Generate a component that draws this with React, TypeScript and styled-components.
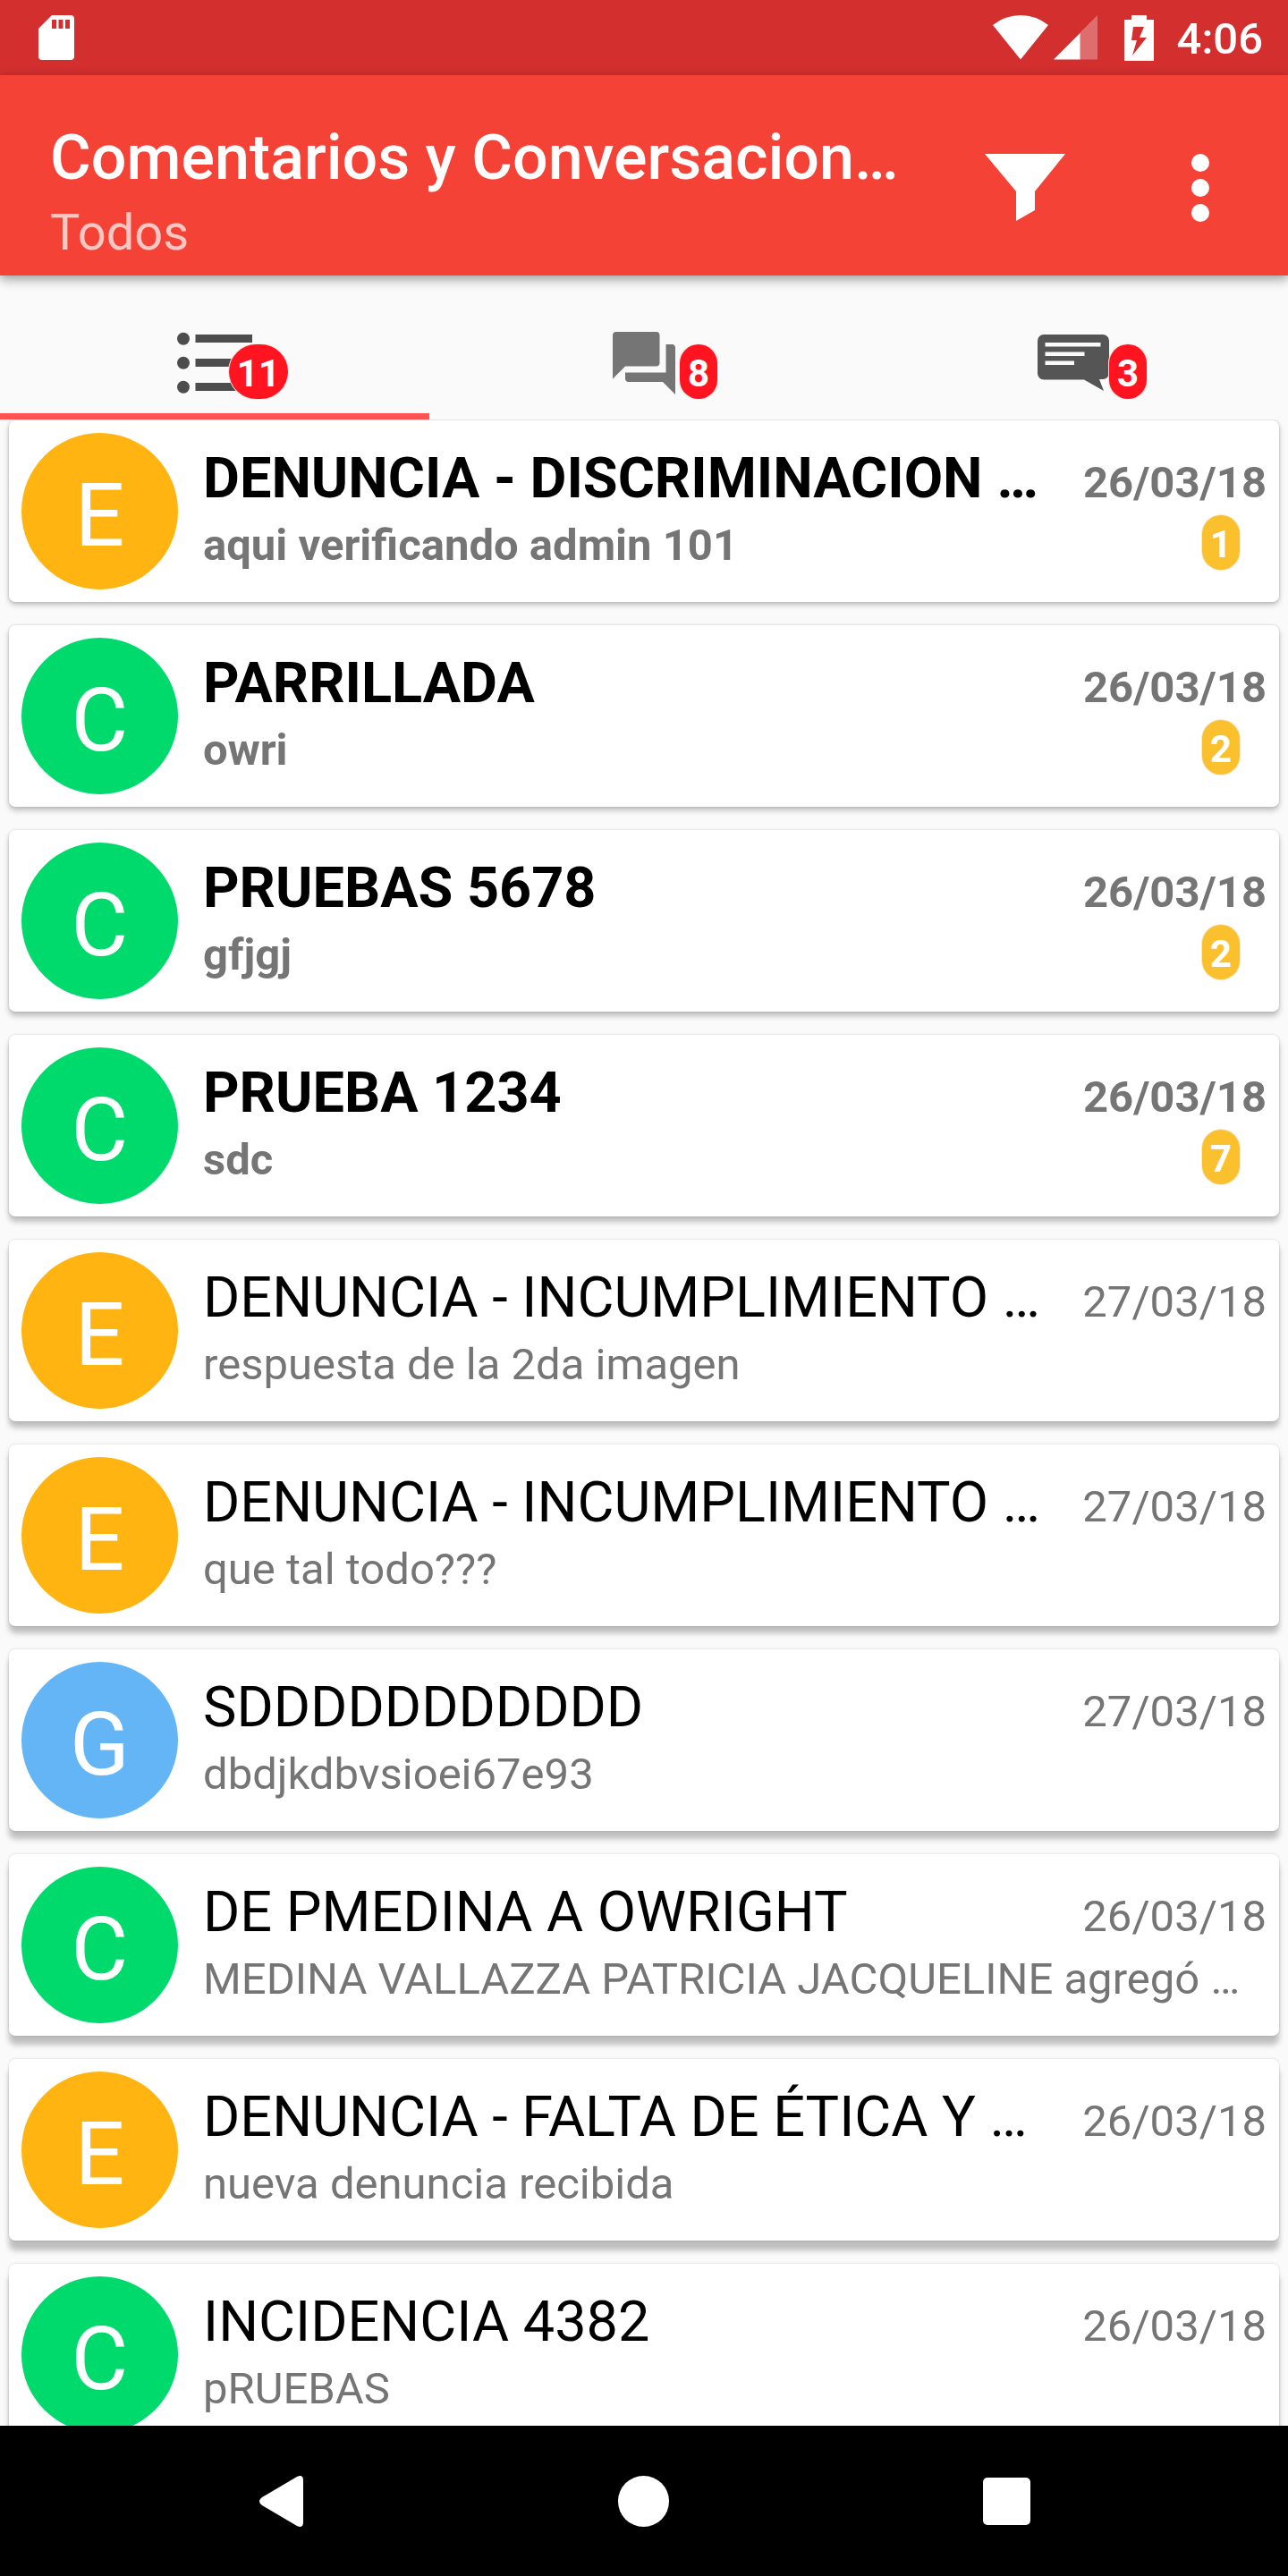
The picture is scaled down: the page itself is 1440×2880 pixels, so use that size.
import React from "react";
import styled, { createGlobalStyle, css } from "styled-components";

const GlobalStyle = createGlobalStyle`
  *, *::before, *::after { box-sizing: border-box; }
  body {
    margin: 0;
    background: #fafafa;
    font-family: Roboto, "Liberation Sans", sans-serif;
  }
  button {
    margin: 0;
    padding: 0;
    border: 0;
    background: none;
    color: inherit;
    font: inherit;
    cursor: pointer;
  }
`;

const Screen = styled.div`
  display: flex;
  flex-direction: column;
  height: 100vh;
  overflow: hidden;
`;

const StatusBar = styled.div`
  display: flex;
  flex: none;
  align-items: center;
  justify-content: space-between;
  height: 84px;
  padding: 0 28px 0 43px;
  background: #d32f2f;
  color: #fff;
`;

const StatusIcons = styled.div`
  display: flex;
  align-items: center;
`;

const Signals = styled.div`
  display: flex;
  gap: 6px;
  margin-right: 30px;
`;

const Clock = styled.time`
  margin-left: 26px;
  padding-top: 3px;
  font-size: 49px;
  line-height: 56px;
  font-weight: 500;
`;

const AppBar = styled.header`
  position: relative;
  z-index: 1;
  display: flex;
  flex: none;
  align-items: center;
  padding: 28px 0 0 56px;
  background: #f44336;
  color: #fff;
  box-shadow: 0 4px 12px rgba(0, 0, 0, 0.4);
`;

const Titles = styled.div`
  flex: 1;
  min-width: 0;
  padding: 24px 0 4px;
`;

const ellipsis = css`
  overflow: hidden;
  white-space: nowrap;
  text-overflow: ellipsis;
`;

const Title = styled.h1`
  ${ellipsis}
  margin: 0;
  font-size: 70px;
  line-height: 80px;
  font-weight: 500;
`;

const Subtitle = styled.p`
  ${ellipsis}
  margin: 0;
  color: rgba(255, 255, 255, 0.7);
  font-size: 56px;
  line-height: 88px;
`;

const ActionButton = styled.button`
  display: flex;
  flex: none;
  align-items: center;
  justify-content: center;
  width: 196px;
  height: 196px;
`;

const Tabs = styled.nav`
  display: flex;
  flex: none;
`;

const Tab = styled.button<{ $active?: boolean }>`
  display: flex;
  flex: 1;
  justify-content: center;
  padding: 56px 0 14px;
  border-bottom: 7px solid ${(p) => (p.$active ? "#ff5252" : "transparent")};
`;

const TabIcon = styled.span`
  position: relative;
  width: 84px;
  height: 84px;
`;

const Badge = styled.span<{ $tone: "red" | "amber" }>`
  flex: none;
  height: 61px;
  padding: 4px 9px 0;
  border-radius: 31px;
  background: ${(p) => (p.$tone === "red" ? "#ff1420" : "#fbc02d")};
  box-shadow: 0 0 0 1px ${(p) => (p.$tone === "red" ? "#ffe4e4" : "#f8ead0")};
  color: #fff;
  font-size: 42px;
  line-height: 58px;
  font-weight: 700;
`;

const TabBadge = styled(Badge)`
  position: absolute;
  top: 21px;
  right: -40px;
`;

const List = styled.ul`
  display: flex;
  flex: 1;
  flex-direction: column;
  gap: 26px;
  min-height: 0;
  margin: 0;
  padding: 1px 10px 0;
  overflow: hidden;
  list-style: none;
`;

const Card = styled.li<{ $depth: number }>`
  display: flex;
  flex: none;
  gap: 28px;
  padding: 14px;
  border-radius: 7px;
  background: #fff;
  box-shadow:
    0 0 3px rgba(0, 0, 0, 0.16),
    0 ${(p) => 3 + p.$depth}px 6px rgba(0, 0, 0, 0.24);
`;

const Avatar = styled.div<{ $color: string }>`
  display: flex;
  flex: none;
  align-items: center;
  justify-content: center;
  width: 175px;
  height: 175px;
  padding-top: 9px;
  border-radius: 50%;
  background: ${(p) => p.$color};
  color: #fff;
  font-size: 98px;
`;

const Body = styled.div<{ $unread: boolean }>`
  flex: 1;
  min-width: 0;
  padding-top: 9px;
  font-weight: ${(p) => (p.$unread ? 700 : 400)};
`;

const Heading = styled.div`
  display: flex;
  align-items: baseline;
  justify-content: space-between;
  gap: 28px;
`;

const Subject = styled.h2`
  ${ellipsis}
  margin: 0;
  color: #000;
  font-size: 63px;
  line-height: 83px;
  font-weight: inherit;
`;

const DateLabel = styled.time`
  flex: none;
  color: #757575;
  font-size: 49px;
`;

const Detail = styled.div<{ $badged: boolean }>`
  display: flex;
  align-items: flex-start;
  justify-content: space-between;
  padding-right: ${(p) => (p.$badged ? 30 : 0)}px;
`;

const Preview = styled.p`
  ${ellipsis}
  margin: 0;
  color: #757575;
  font-size: 49px;
  line-height: 68px;
`;

const NavBar = styled.footer`
  display: flex;
  flex: none;
  height: 168px;
  padding: 0 112px;
  background: #000;
`;

const NavButton = styled.button`
  display: flex;
  flex: 1;
  align-items: center;
  justify-content: center;
`;

const SdCardIcon = () => (
  <svg width="40" height="50" viewBox="0 0 40 50" fill="#fff" aria-hidden="true">
    <path
      fillRule="evenodd"
      d="M15 0H36a4 4 0 0 1 4 4V46a4 4 0 0 1-4 4H4a4 4 0 0 1-4-4V15ZM15 5V15H20V5ZM22.500 5V15H27.500V5ZM30 5V15H35V5Z"
    />
  </svg>
);

const WifiIcon = () => (
  <svg width="62" height="50" viewBox="0 0 62 50" fill="#fff" aria-hidden="true">
    <path d="M0 11Q14 0 31 0T62 11L31 49.500Z" />
  </svg>
);

const SignalIcon = () => (
  <svg width="49" height="50" viewBox="0 0 49 50" fill="#fff" aria-hidden="true">
    <path opacity=".3" d="M49 0V49.500H29V20Z" />
    <path d="M29.500 20V49.500H0Z" />
  </svg>
);

const BatteryIcon = () => (
  <svg width="33" height="51" viewBox="0 0 33 51" fill="#fff" aria-hidden="true">
    <path fillRule="evenodd" d="M8 0H25V5H33V51H0V5H8ZM10 13L8 28H14L9 45L25 25H17L22 13Z" />
  </svg>
);

const FilterIcon = () => (
  <svg width="90" height="76" viewBox="0 0 90 76" fill="#fff" aria-hidden="true">
    <path d="M0 0H90L56 42V63L35 75V42Z" />
  </svg>
);

const MoreIcon = () => (
  <svg width="20" height="76" viewBox="0 0 20 76" fill="#fff" aria-hidden="true">
    <circle cx="10" cy="10" r="10" />
    <circle cx="10" cy="38" r="10" />
    <circle cx="10" cy="66" r="10" />
  </svg>
);

const ListIcon = () => (
  <svg width="84" height="84" viewBox="0 0 84 84" fill="#4d4d4d" aria-hidden="true">
    <circle cx="7" cy="14.700" r="7" />
    <circle cx="7" cy="41.700" r="7" />
    <circle cx="7" cy="68.700" r="7" />
    <path d="M20.500 10H84V19H20.500ZM20.500 37H84V46H20.500ZM20.500 64H84V73H20.500Z" />
  </svg>
);

const ForumIcon = () => (
  <svg width="84" height="84" viewBox="0 0 24 24" fill="#757575" aria-hidden="true">
    <path d="M21 6h-2v9H6v2c0 .55.45 1 1 1h11l4 4V7c0-.55-.45-1-1-1zm-4 6V3c0-.55-.45-1-1-1H3c-.55 0-1 .45-1 1v14l4-4h10c.55 0 1-.45 1-1z" />
  </svg>
);

const CommentIcon = () => (
  <svg width="84" height="84" viewBox="0 0 84 84" aria-hidden="true">
    <path
      fill="#555"
      d="M9 10H75a7 7 0 0 1 7 7V53a7 7 0 0 1-7 7H71L76 73L54 60.500H9a7 7 0 0 1-7-7V17a7 7 0 0 1 7-7Z"
    />
    <path fill="#fafafa" d="M10.500 19H72.500V23.500H10.500ZM10.500 29.500H54.500V34H10.500ZM10.500 39.500H43V44H10.500Z" />
  </svg>
);

const BackIcon = () => (
  <svg width="49" height="57" viewBox="0 0 49 57" fill="#fff" aria-hidden="true">
    <path d="M42 1Q49-2 49 5V52Q49 59 42 56L3 33Q-3 28.500 3 24Z" />
  </svg>
);

const HomeIcon = () => (
  <svg width="57" height="57" viewBox="0 0 57 57" fill="#fff" aria-hidden="true">
    <circle cx="28.500" cy="28.500" r="28.500" />
  </svg>
);

const RecentIcon = () => (
  <svg width="53" height="53" viewBox="0 0 53 53" fill="#fff" aria-hidden="true">
    <rect width="53" height="53" rx="5" />
  </svg>
);

const avatarColors: Record<string, string> = {
  E: "#ffb412",
  C: "#00da6c",
  G: "#64b5f6",
};

interface Conversation {
  kind: string;
  subject: string;
  preview: string;
  date: string;
  unread?: number;
}

const conversations: Conversation[] = [
  { kind: "E", subject: "DENUNCIA - DISCRIMINACION …", preview: "aqui verificando admin 101", date: "26/03/18", unread: 1 },
  { kind: "C", subject: "PARRILLADA", preview: "owri", date: "26/03/18", unread: 2 },
  { kind: "C", subject: "PRUEBAS 5678", preview: "gfjgj", date: "26/03/18", unread: 2 },
  { kind: "C", subject: "PRUEBA 1234", preview: "sdc", date: "26/03/18", unread: 7 },
  { kind: "E", subject: "DENUNCIA - INCUMPLIMIENTO …", preview: "respuesta de la 2da imagen", date: "27/03/18" },
  { kind: "E", subject: "DENUNCIA - INCUMPLIMIENTO …", preview: "que tal todo???", date: "27/03/18" },
  { kind: "G", subject: "SDDDDDDDDDDD", preview: "dbdjkdbvsioei67e93", date: "27/03/18" },
  { kind: "C", subject: "DE PMEDINA A OWRIGHT", preview: "MEDINA VALLAZZA PATRICIA JACQUELINE agregó …", date: "26/03/18" },
  { kind: "E", subject: "DENUNCIA - FALTA DE ÉTICA Y …", preview: "nueva denuncia recibida", date: "26/03/18" },
  { kind: "C", subject: "INCIDENCIA 4382", preview: "pRUEBAS", date: "26/03/18" },
];

const tabs = [
  { label: "Todos", count: 11, Icon: ListIcon },
  { label: "Conversaciones", count: 8, Icon: ForumIcon },
  { label: "Comentarios", count: 3, Icon: CommentIcon },
];

export default function App() {
  const [active, setActive] = React.useState(0);

  return (
    <>
      <GlobalStyle />
      <Screen>
        <StatusBar>
          <SdCardIcon />
          <StatusIcons>
            <Signals>
              <WifiIcon />
              <SignalIcon />
            </Signals>
            <BatteryIcon />
            <Clock>4:06</Clock>
          </StatusIcons>
        </StatusBar>

        <AppBar>
          <Titles>
            <Title>Comentarios y Conversacion…</Title>
            <Subtitle>Todos</Subtitle>
          </Titles>
          <ActionButton type="button" aria-label="Filtrar">
            <FilterIcon />
          </ActionButton>
          <ActionButton type="button" aria-label="Más opciones">
            <MoreIcon />
          </ActionButton>
        </AppBar>

        <Tabs>
          {tabs.map(({ label, count, Icon }, i) => (
            <Tab
              key={label}
              type="button"
              aria-label={label}
              aria-pressed={i === active}
              $active={i === active}
              onClick={() => setActive(i)}
            >
              <TabIcon>
                <Icon />
                <TabBadge $tone="red">{count}</TabBadge>
              </TabIcon>
            </Tab>
          ))}
        </Tabs>

        <List>
          {conversations.map((item, i) => (
            <Card key={i} $depth={i}>
              <Avatar $color={avatarColors[item.kind]}>{item.kind}</Avatar>
              <Body $unread={item.unread !== undefined}>
                <Heading>
                  <Subject>{item.subject}</Subject>
                  <DateLabel>{item.date}</DateLabel>
                </Heading>
                <Detail $badged={item.unread !== undefined}>
                  <Preview>{item.preview}</Preview>
                  {item.unread !== undefined && <Badge $tone="amber">{item.unread}</Badge>}
                </Detail>
              </Body>
            </Card>
          ))}
        </List>

        <NavBar>
          <NavButton type="button" aria-label="Atrás">
            <BackIcon />
          </NavButton>
          <NavButton type="button" aria-label="Inicio">
            <HomeIcon />
          </NavButton>
          <NavButton type="button" aria-label="Recientes">
            <RecentIcon />
          </NavButton>
        </NavBar>
      </Screen>
    </>
  );
}
